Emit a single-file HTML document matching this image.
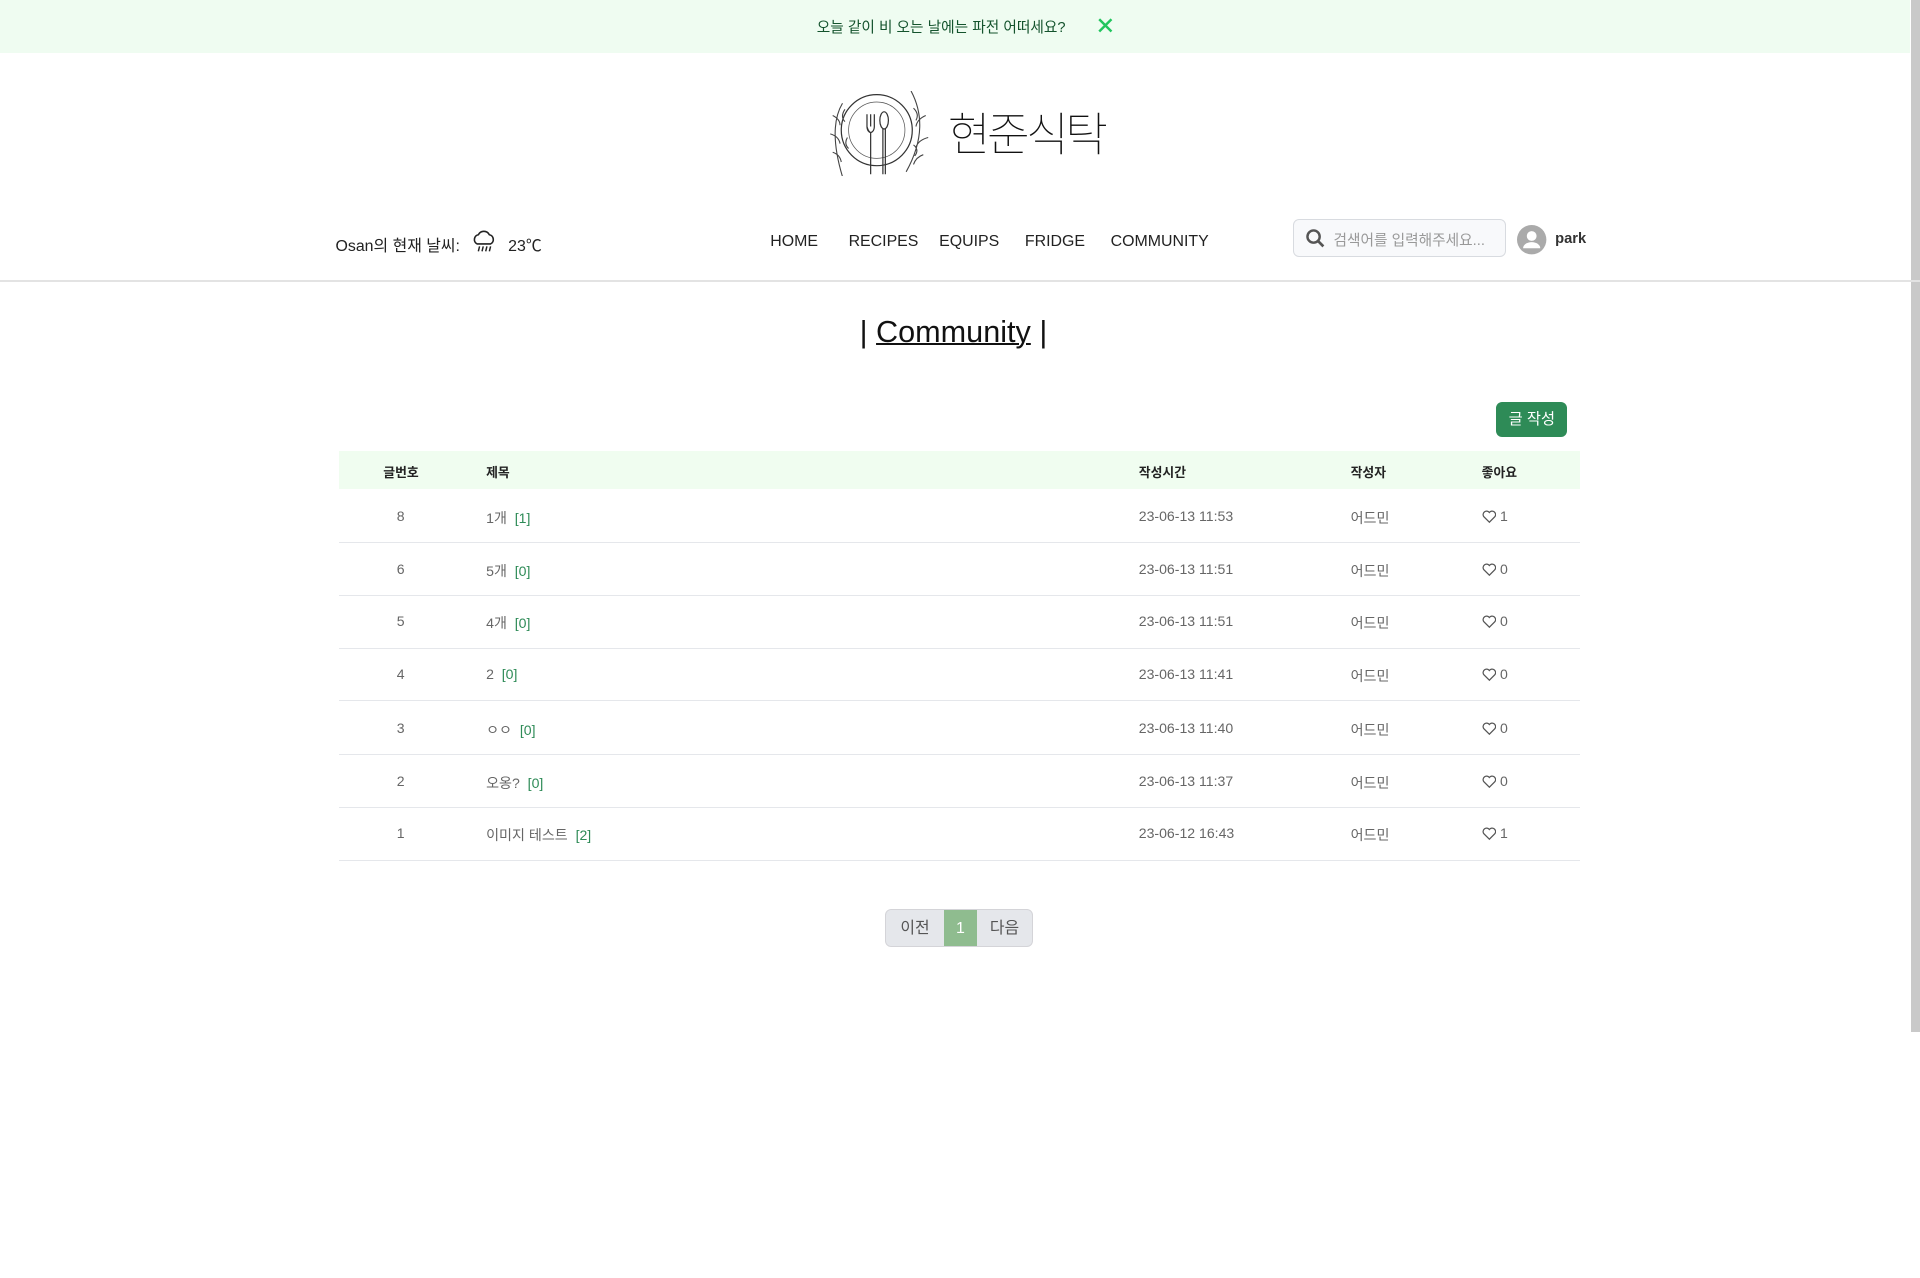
<!DOCTYPE html>
<html><head><meta charset="utf-8">
<style>
html{zoom:1.22449}
body{margin:0;width:1568px;height:1044px;position:relative;overflow:hidden;background:#fff;font-family:"Liberation Sans","Noto Sans CJK KR",sans-serif;color:#222}
.a{position:absolute;white-space:nowrap}
.banner{left:0;top:0;width:1560px;height:43px;background:#effcf1}
.nav{top:190px;font-size:13px;color:#222}
.th{top:377px;font-size:10.5px;font-weight:bold;color:#222}
.row{position:absolute;left:277px;width:1013px;height:43px;border-bottom:1.5px solid #e5e7eb;font-size:11.5px;color:#666}
.row span{position:absolute;top:15px;white-space:nowrap}
.b{color:#2e8b57}
.heart{display:inline-block;vertical-align:-2px;margin-right:3px}
</style></head><body>
<div class="a banner"></div>
<div class="a" style="left:667px;top:13px;font-size:12px;color:#14532d">오늘 같이 비 오는 날에는 파전 어떠세요?</div>
<svg class="a" style="left:897px;top:15px" width="12" height="12" viewBox="0 0 12 12"><path d="M1 1L11 11M11 1L1 11" stroke="#22c55e" stroke-width="2"/></svg>
<div class="a" style="left:1561px;top:0;width:7px;height:843px;background:#c9c9c9"></div>

<svg class="a" style="left:668px;top:74px" width="102" height="70" viewBox="0 0 102 70">
<circle cx="48" cy="32" r="29" fill="none" stroke="#333" stroke-width="1"/>
<circle cx="48" cy="32" r="23" fill="none" stroke="#555" stroke-width=".6"/>
<path d="M43 19v10M46 19v10M40 19v10q0 4 3 5v34M43 34v34M40 29q1 4 3 5q3-1 3-5" fill="none" stroke="#333" stroke-width="1"/>
<ellipse cx="54" cy="24" rx="3.5" ry="7" fill="none" stroke="#333"/><path d="M53 31v37M55 31v37" stroke="#333" stroke-width="1"/>
<path d="M20 10q-12 20 0 60M12 20q6 3 6 8M10 35q7 2 8 8M12 50q6 2 7 8M22 15q-4 6 0 10M24 38q-3 5 1 9" fill="none" stroke="#444" stroke-width=".9"/>
<path d="M76 0q16 30 -4 66M88 20q-7 3-8 9M90 38q-8 2-10 8M86 52q-6 2-8 8M78 14q5 5 2 10M78 44q5 4 1 9" fill="none" stroke="#444" stroke-width=".9"/>
</svg>
<div class="a" style="left:774px;top:80px;font-size:38px;font-weight:100;color:#111;letter-spacing:-3px;font-family:'Noto Sans CJK KR',sans-serif">현준식탁</div>

<div class="a" style="left:274px;top:190px;font-size:13px">Osan의 현재 날씨:</div>
<svg class="a" style="left:385px;top:186px" width="22" height="22" viewBox="0 0 22 22"><path d="M5 13a4 4 0 0 1 1-7.5a5 5 0 0 1 9 0a4 4 0 0 1 1 7.5z" fill="none" stroke="#222" stroke-width="1.3"/><path d="M7 15l-1 4M10 15l-1 4M13 15l-1 4M16 15l-1 4" stroke="#222" stroke-width="1.2"/></svg>
<div class="a" style="left:415px;top:190px;font-size:13px">23℃</div>
<div class="a nav" style="left:629px">HOME</div>
<div class="a nav" style="left:693px">RECIPES</div>
<div class="a nav" style="left:767px">EQUIPS</div>
<div class="a nav" style="left:837px">FRIDGE</div>
<div class="a nav" style="left:907px">COMMUNITY</div>
<div class="a" style="left:1056px;top:179px;width:172px;height:29px;border:1px solid #d8dbe0;border-radius:5px;background:#f8f9fb"></div>
<svg class="a" style="left:1066px;top:186px" width="17" height="17" viewBox="0 0 17 17"><circle cx="7" cy="7" r="5" fill="none" stroke="#555" stroke-width="2"/><path d="M10.5 10.5L15 15" stroke="#555" stroke-width="2.2"/></svg>
<div class="a" style="left:1089px;top:187px;font-size:12px;color:#999">검색어를 입력해주세요...</div>
<svg class="a" style="left:1239px;top:184px" width="24" height="24" viewBox="0 0 24 24"><circle cx="12" cy="12" r="12" fill="#aaa"/><circle cx="12" cy="9" r="4" fill="#fff"/><path d="M5 19a7 5 0 0 1 14 0z" fill="#fff"/></svg>
<div class="a" style="left:1270px;top:189px;font-size:12px;font-weight:bold;color:#333">park</div>
<div class="a" style="left:0;top:229px;width:1568px;height:1px;background:#e3e3e3"></div>

<div class="a" style="left:702px;top:257px;font-size:25px;color:#111;font-family:'Liberation Sans',sans-serif">| <span style="text-decoration:underline;text-decoration-thickness:1.5px">Community</span> |</div>

<div class="a" style="left:1222px;top:328px;width:58px;height:29px;border-radius:5px;background:#2e8b57;color:#fff;font-size:12.5px;text-align:center;line-height:29px">글 작성</div>

<div class="a" style="left:277px;top:368px;width:1013px;height:31px;background:#f0fdf0"></div>
<div class="a th" style="left:313px">글번호</div>
<div class="a th" style="left:397px">제목</div>
<div class="a th" style="left:930px">작성시간</div>
<div class="a th" style="left:1103px">작성자</div>
<div class="a th" style="left:1210px">좋아요</div>

<div class="row" style="top:400px"><span style="left:47px">8</span><span style="left:120px">1개 <b class="b" style="font-weight:normal">&nbsp;[1]</b></span><span style="left:653px">23-06-13 11:53</span><span style="left:826px">어드민</span><span style="left:933px"><svg class="heart" width="12" height="11" viewBox="0 0 12 11"><path d="M6 10L1.5 5.5a2.6 2.6 0 0 1 4.5-3.5a2.6 2.6 0 0 1 4.5 3.5z" fill="none" stroke="#555"/></svg>1</span></div>
<div class="row" style="top:443px"><span style="left:47px">6</span><span style="left:120px">5개 <b class="b" style="font-weight:normal">&nbsp;[0]</b></span><span style="left:653px">23-06-13 11:51</span><span style="left:826px">어드민</span><span style="left:933px"><svg class="heart" width="12" height="11" viewBox="0 0 12 11"><path d="M6 10L1.5 5.5a2.6 2.6 0 0 1 4.5-3.5a2.6 2.6 0 0 1 4.5 3.5z" fill="none" stroke="#555"/></svg>0</span></div>
<div class="row" style="top:486px"><span style="left:47px">5</span><span style="left:120px">4개 <b class="b" style="font-weight:normal">&nbsp;[0]</b></span><span style="left:653px">23-06-13 11:51</span><span style="left:826px">어드민</span><span style="left:933px"><svg class="heart" width="12" height="11" viewBox="0 0 12 11"><path d="M6 10L1.5 5.5a2.6 2.6 0 0 1 4.5-3.5a2.6 2.6 0 0 1 4.5 3.5z" fill="none" stroke="#555"/></svg>0</span></div>
<div class="row" style="top:529px"><span style="left:47px">4</span><span style="left:120px">2 &nbsp;<b class="b" style="font-weight:normal">[0]</b></span><span style="left:653px">23-06-13 11:41</span><span style="left:826px">어드민</span><span style="left:933px"><svg class="heart" width="12" height="11" viewBox="0 0 12 11"><path d="M6 10L1.5 5.5a2.6 2.6 0 0 1 4.5-3.5a2.6 2.6 0 0 1 4.5 3.5z" fill="none" stroke="#555"/></svg>0</span></div>
<div class="row" style="top:573px"><span style="left:47px">3</span><span style="left:120px">ㅇㅇ <b class="b" style="font-weight:normal">&nbsp;[0]</b></span><span style="left:653px">23-06-13 11:40</span><span style="left:826px">어드민</span><span style="left:933px"><svg class="heart" width="12" height="11" viewBox="0 0 12 11"><path d="M6 10L1.5 5.5a2.6 2.6 0 0 1 4.5-3.5a2.6 2.6 0 0 1 4.5 3.5z" fill="none" stroke="#555"/></svg>0</span></div>
<div class="row" style="top:616px"><span style="left:47px">2</span><span style="left:120px">오옹? &nbsp;<b class="b" style="font-weight:normal">[0]</b></span><span style="left:653px">23-06-13 11:37</span><span style="left:826px">어드민</span><span style="left:933px"><svg class="heart" width="12" height="11" viewBox="0 0 12 11"><path d="M6 10L1.5 5.5a2.6 2.6 0 0 1 4.5-3.5a2.6 2.6 0 0 1 4.5 3.5z" fill="none" stroke="#555"/></svg>0</span></div>
<div class="row" style="top:659px"><span style="left:47px">1</span><span style="left:120px">이미지 테스트 <b class="b" style="font-weight:normal">&nbsp;[2]</b></span><span style="left:653px">23-06-12 16:43</span><span style="left:826px">어드민</span><span style="left:933px"><svg class="heart" width="12" height="11" viewBox="0 0 12 11"><path d="M6 10L1.5 5.5a2.6 2.6 0 0 1 4.5-3.5a2.6 2.6 0 0 1 4.5 3.5z" fill="none" stroke="#555"/></svg>1</span></div>

<div class="a" style="left:723px;top:742px;width:119px;height:30px;border:1px solid #d4d4d8;border-radius:5px;background:#e5e7eb;overflow:hidden;font-size:13px;color:#555">
<div class="a" style="left:0;top:1px;width:47px;height:30px;line-height:30px;text-align:center">이전</div>
<div class="a" style="left:47px;top:0;width:27px;height:30px;line-height:31px;text-align:center;background:#8fbc8f;color:#fff">1</div>
<div class="a" style="left:74px;top:1px;width:45px;height:30px;line-height:30px;text-align:center">다음</div>
</div>
</body></html>
